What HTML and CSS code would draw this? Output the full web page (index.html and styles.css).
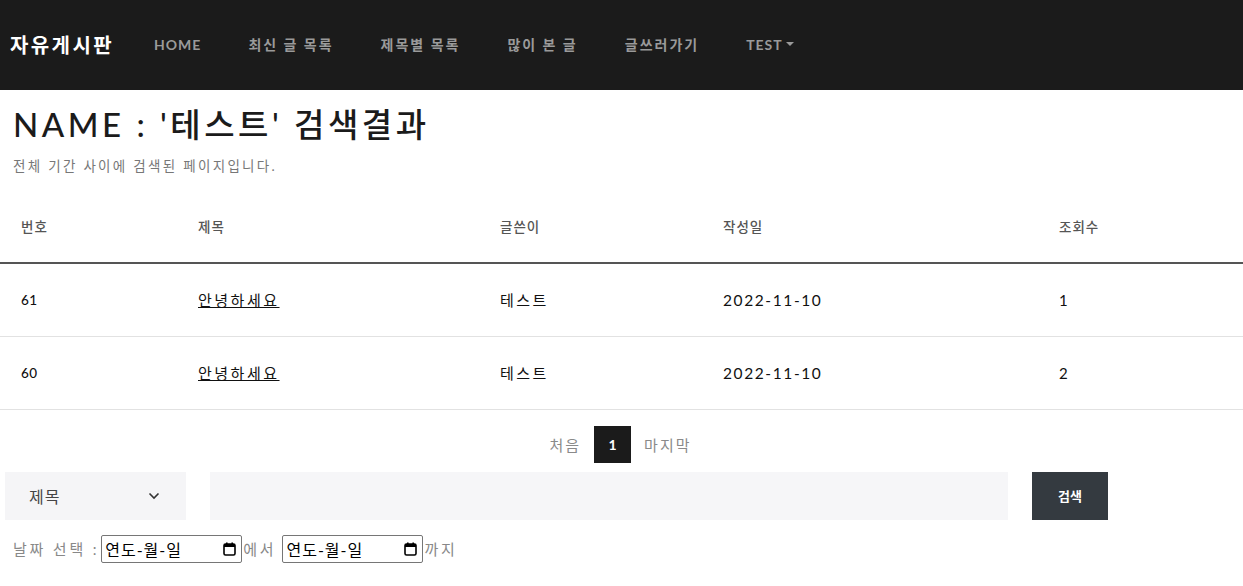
FILE: index.html
```html
<!DOCTYPE html>
<html lang="ko">
<head>
<meta charset="utf-8">
<link rel="stylesheet" href="styles.css">
</head>
<body>
<nav class="navbar">
  <a class="brand">자유게시판</a>
  <ul class="nav">
    <li class="latin">HOME</li>
    <li>최신 글 목록</li>
    <li>제목별 목록</li>
    <li>많이 본 글</li>
    <li>글쓰러가기</li>
    <li class="latin">TEST<span class="caret"></span></li>
  </ul>
</nav>
<header class="head">
  <h1 class="title">NAME : '테스트' 검색결과</h1>
  <p class="sub">전체 기간 사이에 검색된 페이지입니다.</p>
</header>
<table class="board">
  <colgroup>
    <col class="c1"><col class="c2"><col class="c3"><col class="c4"><col class="c5">
  </colgroup>
  <thead>
    <tr><th>번호</th><th>제목</th><th>글쓴이</th><th>작성일</th><th>조회수</th></tr>
  </thead>
  <tbody>
    <tr><td class="num">61</td><td><a class="link">안녕하세요</a></td><td>테스트</td><td class="date">2022-11-10</td><td class="num2">1</td></tr>
    <tr><td class="num">60</td><td><a class="link">안녕하세요</a></td><td>테스트</td><td class="date">2022-11-10</td><td class="num2">2</td></tr>
  </tbody>
</table>
<div class="pager">
  <span class="pg-text">처음</span>
  <span class="pg-cur">1</span>
  <span class="pg-text">마지막</span>
</div>
<form class="search">
  <div class="select">
    <span>제목</span>
    <svg class="chev" width="12" height="8" viewBox="0 0 12 8"><path d="M1.5 1.5 L6 6 L10.5 1.5" fill="none" stroke="#333" stroke-width="1.6"/></svg>
  </div>
  <div class="field"></div>
  <div class="btn">검색</div>
</form>
<div class="dates">
  <span>날짜 선택 :</span>
  <div class="date-in"><span>연도-월-일</span><svg width="13" height="14" viewBox="0 0 13 14"><rect x="1" y="2" width="11" height="11" rx="1.5" fill="none" stroke="#000" stroke-width="1.6"/><rect x="1" y="2" width="11" height="3" fill="#000"/><rect x="3" y="0.5" width="1.6" height="2" fill="#000"/><rect x="8.4" y="0.5" width="1.6" height="2" fill="#000"/></svg></div>
  <span>에서</span>
  <div class="date-in"><span>연도-월-일</span><svg width="13" height="14" viewBox="0 0 13 14"><rect x="1" y="2" width="11" height="11" rx="1.5" fill="none" stroke="#000" stroke-width="1.6"/><rect x="1" y="2" width="11" height="3" fill="#000"/><rect x="3" y="0.5" width="1.6" height="2" fill="#000"/><rect x="8.4" y="0.5" width="1.6" height="2" fill="#000"/></svg></div>
  <span>까지</span>
</div>
</body>
</html>
```
FILE: styles.css
```css
* { box-sizing: border-box; }
body {
  margin: 0;
  font-family: "Lato", "Noto Sans CJK KR", sans-serif;
  color: #212529;
  background: #fff;
}
.navbar {
  height: 90px;
  background: #1b1b1b;
  display: flex;
  align-items: center;
  padding: 0 0 2px 10px;
}
.brand {
  color: #fff;
  font-size: 20px;
  font-weight: 700;
  letter-spacing: 2.4px;
  margin-right: 40px;
}
.nav {
  list-style: none;
  display: flex;
  margin: 0;
  padding: 0;
}
.nav li {
  color: #9a9a9a;
  font-size: 14px;
  font-weight: 700;
  letter-spacing: 2px;
  margin-right: 47px;
  display: flex;
  align-items: center;
}
.nav li.latin { letter-spacing: 1px; }
.caret {
  display: inline-block;
  width: 0; height: 0;
  border-left: 4px solid transparent;
  border-right: 4px solid transparent;
  border-top: 4px solid #9a9a9a;
  margin-left: 3px;
}
.head { padding: 12px 13px 0; }
.title {
  margin: 0;
  font-size: 33px;
  font-weight: 500;
  letter-spacing: 3.5px;
  color: #1b1b1b;
  line-height: 44px;
}
.sub {
  margin: 9px 0 0;
  font-size: 13.5px;
  color: #777;
  letter-spacing: 2.3px;
}
.board {
  width: 100%;
  border-collapse: collapse;
  margin-top: 15px;
  table-layout: fixed;
}
.c1 { width: 177px; }
.c2 { width: 302px; }
.c3 { width: 223px; }
.c4 { width: 336px; }
.c5 { width: 205px; }
.board th {
  text-align: left;
  font-size: 13.5px;
  font-weight: 500;
  color: #555;
  letter-spacing: 1px;
  height: 73px;
  padding: 0 21px;
  border-bottom: 2px solid #555;
}
.board td {
  height: 73px;
  padding: 0 21px;
  border-bottom: 1px solid #e2e2e2;
  font-size: 15px;
  letter-spacing: 2.5px;
  color: #111;
}
.board td.num { font-size: 13.5px; font-weight: 500; letter-spacing: 0.5px; }
.board td.date { letter-spacing: 1.6px; font-size: 15.5px; }
.link { color: #111; text-decoration: underline; }
.pager {
  display: flex;
  justify-content: center;
  align-items: center;
  gap: 13px;
  margin-top: 16px;
  padding-right: 2px;
}
.pg-text { color: #8a8a8a; font-size: 15px; letter-spacing: 2px; }
.pg-cur {
  width: 37px; height: 37px;
  background: #1b1b1b;
  color: #fff;
  font-size: 14px;
  font-weight: 700;
  display: flex;
  align-items: center;
  justify-content: center;
}
.search {
  display: flex;
  align-items: center;
  margin: 9px 0 0 5px;
  height: 48px;
}
.select {
  width: 181px;
  height: 48px;
  background: #f5f5f7;
  display: flex;
  align-items: center;
  justify-content: space-between;
  padding: 0 26px 0 24px;
  font-size: 16px;
  letter-spacing: 1px;
  color: #444;
}
.field {
  width: 798px;
  height: 48px;
  background: #f6f6f8;
  margin-left: 24px;
}
.btn {
  width: 76px;
  height: 48px;
  margin-left: 24px;
  background: #343a40;
  color: #fff;
  font-size: 13px;
  font-weight: 700;
  display: flex;
  align-items: center;
  justify-content: center;
}
.dates {
  display: flex;
  align-items: center;
  margin: 15px 0 0 13px;
  font-size: 15px;
  color: #888;
}
.dates > span { letter-spacing: 2.8px; }
.date-in {
  width: 141px;
  height: 28px;
  border: 1px solid #767676;
  border-radius: 2px;
  display: flex;
  align-items: center;
  justify-content: space-between;
  padding: 0 5px 0 3px;
  margin: 0 1px 0 2px;
  font-size: 16px;
  letter-spacing: 1px;
  color: #000;
}
.date-in + span { margin-right: 4px; }
```
